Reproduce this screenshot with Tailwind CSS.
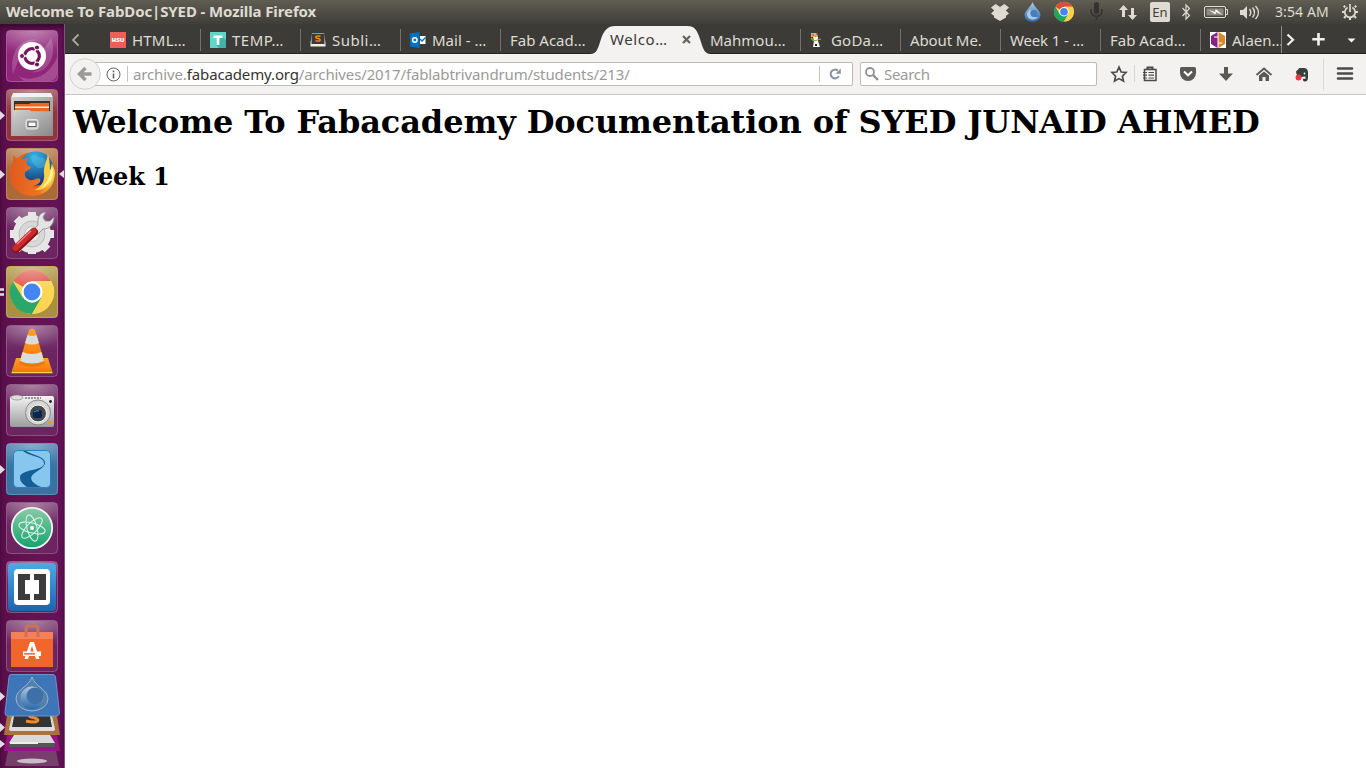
<!DOCTYPE html>
<html lang="en">
<head>
<meta charset="utf-8">
<title>Welcome To FabDoc|SYED</title>
<script src="https://cdn.jsdelivr.net/npm/@tailwindcss/browser@4"></script>
</head>
<body class="w-[1366px] h-[768px] overflow-hidden bg-white font-['Noto_Sans',sans-serif] flex flex-col">
<svg class="absolute w-0 h-0" aria-hidden="true">
  <defs>
    <linearGradient id="gloss" x1="0" y1="0" x2="0" y2="1"><stop offset="0" stop-color="#fff" stop-opacity=".2"/><stop offset=".5" stop-color="#fff" stop-opacity=".05"/><stop offset="1" stop-color="#fff" stop-opacity=".05"/></linearGradient>
    <radialGradient id="shine" cx=".5" cy="0" r=".75"><stop offset="0" stop-color="#fff" stop-opacity=".32"/><stop offset="1" stop-color="#fff" stop-opacity="0"/></radialGradient>
    <linearGradient id="silver" x1="0" y1="0" x2="0" y2="1"><stop offset="0" stop-color="#f4f4f4"/><stop offset="1" stop-color="#9c9c9c"/></linearGradient>
    <linearGradient id="metal" x1="0" y1="0" x2="1" y2="1"><stop offset="0" stop-color="#d0d0d0"/><stop offset="1" stop-color="#8a8a8a"/></linearGradient>
    <linearGradient id="fox" x1="0" y1="0" x2="1" y2="0"><stop offset="0" stop-color="#df5a1e"/><stop offset=".65" stop-color="#ee7424"/><stop offset="1" stop-color="#fbc43c"/></linearGradient>
    <radialGradient id="globe" cx=".45" cy=".15" r=".8"><stop offset="0" stop-color="#35b6e8"/><stop offset="1" stop-color="#123b7c"/></radialGradient>
    <linearGradient id="orange" x1="0" y1="0" x2="0" y2="1"><stop offset="0" stop-color="#ffa02c"/><stop offset="1" stop-color="#f07400"/></linearGradient>
    <linearGradient id="atom" x1="0" y1="0" x2="0" y2="1"><stop offset="0" stop-color="#8bcba6"/><stop offset="1" stop-color="#12a36c"/></linearGradient>
    <linearGradient id="brk" x1="0" y1="0" x2="0" y2="1"><stop offset="0" stop-color="#4fa9e6"/><stop offset="1" stop-color="#1b64b0"/></linearGradient>
    <linearGradient id="drop" x1="0" y1="0" x2="0" y2="1"><stop offset="0" stop-color="#a9c9e6"/><stop offset="1" stop-color="#2d68a8"/></linearGradient>
    <g id="chrome">
      <circle r="22" fill="#f9cf45"/>
      <path d="M0 0 L-19 -11 A22 22 0 0 1 19 -11 L0 -11Z" fill="#dd4b3e"/>
      <path d="M-19.2 -11 A22 22 0 0 0 0 22 L9.5 5.5 L0 9 L-9.5 5.5Z" fill="#1ea362"/>
      <path d="M0 -11 L19.2 -11 A22 22 0 0 1 0 22 L9.5 5.5Z" fill="#fdd24a"/>
      <circle r="10.4" fill="#fff"/><circle r="8.4" fill="#4285f4"/>
    </g>
    <g id="frame"><rect x="6.5" y=".5" width="51" height="51" rx="4" fill="url(#gloss)" stroke="#fff" stroke-opacity=".22"/><rect x="7" y="1" width="50" height="30" rx="4" fill="url(#shine)"/></g>
    <path id="run" d="M0 22v9l5-4.500z" fill="#e3dbe3"/>
  </defs>
</svg>

<header class="h-6 shrink-0 flex items-center bg-linear-to-b from-[#605d52] to-[#3f3e39] text-[#dfdbd2]">
  <h1 class="pl-[6px] pb-[2px] w-[984px] text-[15px] font-bold tracking-[-0.11px] leading-[22px] whitespace-nowrap">Welcome To FabDoc|SYED - Mozilla Firefox</h1>
  <svg class="w-[160px] h-6 shrink-0" viewBox="984 0 160 24">
    <path d="M995.700 4 1000 7 1004.300 4 1009 7.500 1005.800 10.500 1009 13.500 1006 15.800V17.500L1000 21 994 17.500V15.800L991 13.500 994.200 10.500 991 7.500Z" fill="#dfdbd2"/>
    <path d="M1032.500 2C1034 7 1040.500 10.500 1040.500 15A8 7 0 0 1 1024.500 15C1024.500 10.500 1031 7 1032.500 2Z" fill="url(#drop)"/><path d="M1031 9C1029 14 1032 18 1038 17C1035 21.500 1027 20 1027 14.500C1027 12 1029 10 1031 9Z" fill="#c9dff2" opacity=".75"/><circle cx="1034" cy="13.500" r="3.500" fill="#477fb8"/>
    <use href="#chrome" transform="translate(1064 11.700) scale(.45)"/>
    <rect x="1094" y="2" width="5" height="12" rx="2.500" fill="#34332f"/><path d="M1091 9v2a5 5 0 0 0 11 0V9M1096.500 16v4" fill="none" stroke="#34332f" stroke-width="1.500"/>
    <path d="M1123.500 5 1119 10h3v7h3v-7h3zM1132.500 20 1137 15h-3V8h-3v7h-3z" fill="#dfdbd2"/>
  </svg>
  <div class="ml-[6px] w-5 h-5 shrink-0 rounded-[2px] bg-[#dfdbd2] text-[#3f3e39] text-[13px] leading-[20px] text-center">En</div>
  <svg class="w-[100px] h-6 shrink-0" viewBox="1170 0 100 24" fill="none" stroke="#dfdbd2">
    <path d="M1182.500 8 1189.500 15.500 1186 19V5L1189.500 8.500 1182.500 16" stroke-width="1.200"/>
    <rect x="1204.500" y="6.500" width="21" height="11" rx="1.500"/><path d="M1226 9.500h1.500v5h-1.500"/><rect x="1206.500" y="8.500" width="17" height="7" fill="#8d8a81" stroke="none"/><path d="M1209 10 1215.500 14.500 1216 12 1222.500 15 1215.800 9 1215 12Z" fill="#fffdf4" stroke="none"/>
    <path d="M1240 10h3l4-4v13l-4-4h-3z" fill="#dfdbd2" stroke="none"/><path d="M1249.500 9q2.500 3.500 0 7M1252.500 7.500q4 5 0 10M1255.500 6q6 6.500 0 13" stroke-width="1.400"/>
  </svg>
  <span class="ml-[5px] pb-px w-[56px] text-[14px] tracking-[0.1px] leading-[22px] whitespace-nowrap">3:54 AM</span>
  <svg class="ml-[10px] w-[18px] h-[18px] shrink-0" viewBox="-9 -9 18 18" fill="none" stroke="#dfdbd2"><path d="M-2.400 -4.500A5.200 5.200 0 1 0 2.400 -4.500M0 -8V0" stroke-width="1.700"/><path d="M-4.800-4.800-6.200-6.200M4.800-4.800 6.200-6.200M-5.500 0H-8M5.500 0H8M-4.300 4.300-6 6M4.300 4.300 6 6M0 6V8" stroke-width="2.200"/></svg>
</header>

<div class="flex grow min-h-0">
  <nav class="w-[65px] shrink-0 bg-linear-to-r from-[#5a0e4c] via-[#65134f] to-[#64115a] border-r border-[#86507d] shadow-[inset_0_4px_4px_#3b0b31] pt-[6px] flex flex-col gap-[7px]">
    <svg class="w-16 h-[52px] shrink-0" viewBox="0 0 64 52"><rect x="6" width="52" height="52" rx="4" fill="#8a1a72"/><path d="M13 44C8 18 26 3 45 12C34 7 22 14 20 26ZM51 8C58 28 46 45 30 42C43 42 48 30 43 20ZM18 46C32 53 50 46 57 27V44Q56 51 50 51H24Z" fill="#fff" opacity=".18"/><use href="#frame"/><circle cx="32" cy="26" r="14" fill="#fff"/><circle cx="32" cy="26" r="7.300" fill="none" stroke="#76145c" stroke-width="3.300"/><path d="M32 26 20 26M32 26 38 36.500M32 26 38 15.500" stroke="#fff" stroke-width="1.500"/><circle cx="32" cy="26" r="5.500" fill="#fff"/><g fill="#76145c" stroke="#fff"><circle cx="22" cy="26" r="2.500"/><circle cx="37" cy="17.500" r="2.500"/><circle cx="37" cy="34.500" r="2.500"/></g></svg>
    <svg class="w-16 h-[52px] shrink-0" viewBox="0 0 64 52"><use href="#run"/><rect x="6" width="52" height="52" rx="4" fill="#8b2a36"/><use href="#frame"/><path d="M13 4h38l2 5H11Z" fill="#f2f2f2"/><path d="M11 8h42v39H11Z" fill="url(#metal)"/><path d="M14 12h36v10H14Z" fill="#3a302c"/><path d="M15 15h14l2-1h18v8H15Z" fill="#e86a20"/><path d="M15 17.500h34v1.500H15Z" fill="#ffe9d0"/><path d="M13 21h17l1 2h20v24H13Z" fill="url(#metal)"/><rect x="26" y="30.500" width="12" height="9.500" rx="2" fill="#c8c8c8" stroke="#e6e6e6"/><rect x="28" y="33" width="8" height="4.500" fill="#fff" stroke="#555"/></svg>
    <svg class="w-16 h-[52px] shrink-0" viewBox="0 0 64 52"><use href="#run"/><path d="M64 22v8l-5-4z" fill="#e3dbe3"/><rect x="6" width="52" height="52" rx="4" fill="#a8622e"/><use href="#frame"/><circle cx="32" cy="26.500" r="22" fill="#e4621f"/><circle cx="36" cy="20.500" r="17" fill="url(#globe)"/><path d="M31 8C36 5 38 11 43 9C49 15 44 22 38 20C34 17 31 14 31 8Z" fill="#61c3e8" opacity=".35"/><path d="M13 7C16 10 18 11 20 12C22 11 25 11 28 10C26 13 26 14 27 17L31 19C31 21 28 22 25 24C24 28 27 33 33 32C36 31 38 29 40 31C42 35 34 39 30 38C37 43 47 38 50 31C52 25 52 22 51 15C56 24 56 35 48 42C39 50 24 49 15 40C8 32 8 22 13 14Z" fill="url(#fox)"/><path d="M48 6C47 13 43 18 44 26C45 32 42 38 35 42C45 43 54 35 55 26C55 22 54 20 52 16C52 20 51 21 50 22C50 15 49 10 48 6Z" fill="#f9cf45"/><path d="M51 18C51 27 47 35 41 40C49 37 54 30 53 22Z" fill="#fdf09a"/></svg>
    <svg class="w-16 h-[52px] shrink-0" viewBox="0 0 64 52"><rect x="6" width="52" height="52" rx="4" fill="#641a58"/><use href="#frame"/><g transform="translate(32 27)"><circle r="15" fill="none" stroke="#e6e6e6" stroke-width="8"/><g stroke="#e6e6e6" stroke-width="8"><path d="M0-22V-17M0 17V20M-22 0H-17M17 0H22M-15.500-15.500-12-12M12 12 15.500 15.500M-15.500 15.500-12 12"/></g><circle r="13" fill="#d8d8d8" stroke="#bbb"/><circle r="7.500" fill="#ebebeb" stroke="#c4c4c4"/></g><path d="M33 23 38 18C37 10 40 5 46 5L43 10 45 14 50 14 54 10C54 17 50 22 43 22L37 28Z" fill="#e4e4e4" stroke="#858585" stroke-width=".8"/><path d="M16 42 34 25" stroke="#8f1014" stroke-width="8" stroke-linecap="round"/><path d="M15.500 41 33.500 24" stroke="#ca2a2e" stroke-width="6" stroke-linecap="round"/><path d="M17 37 31 24" stroke="#f08080" stroke-width="1.300"/></svg>
    <svg class="w-16 h-[52px] shrink-0" viewBox="0 0 64 52"><path d="M0 23.500h4M0 28.500h4" stroke="#e3dbe3" stroke-width="2.500"/><rect x="6" width="52" height="52" rx="4" fill="#a58a35"/><use href="#chrome" x="32" y="26"/><use href="#frame"/><circle cx="32" cy="26" r="10.400" fill="#fff"/><circle cx="32" cy="26" r="8.400" fill="#4285f4"/></svg>
    <svg class="w-16 h-[52px] shrink-0" viewBox="0 0 64 52"><rect x="6" width="52" height="52" rx="4" fill="#641a58"/><use href="#frame"/><path d="M16 33H48L53 48.500H11Z" fill="url(#orange)"/><path d="M29 5Q32 2 35 5L45 39Q32 45 19 39Z" fill="url(#orange)"/><path d="M27.500 10Q32 12 36.500 10L39 18Q32 21 25 18ZM22.500 27Q32 31 41.500 27L44 36Q32 41 20 36Z" fill="#dcdcdc"/><path d="M12 47.500H52" stroke="#ffd060"/></svg>
    <svg class="w-16 h-[52px] shrink-0" viewBox="0 0 64 52"><rect x="6" width="52" height="52" rx="4" fill="#641a58"/><use href="#frame"/><rect x="10" y="12" width="44" height="31" rx="2" fill="url(#silver)"/><ellipse cx="17" cy="13.500" rx="6" ry="2.500" fill="#ddd" stroke="#777" stroke-width=".6"/><path d="M25 14h16" stroke="#777" stroke-width="1.500" stroke-dasharray="2 1"/><circle cx="38" cy="28.500" r="12.500" fill="#d7d7d7" stroke="#888"/><circle cx="38" cy="29.500" r="8.500" fill="#494949" stroke="#fff"/><rect x="33" y="26" width="9" height="8" rx="2" fill="#0b2456"/><path d="M34 28q3-2 5-1" stroke="#4aa1d8" fill="none"/><circle cx="50.500" cy="17.500" r="1.400" fill="#222"/><rect x="48" y="37" width="3" height="3" fill="#f29a1f"/></svg>
    <svg class="w-16 h-[52px] shrink-0" viewBox="0 0 64 52"><use href="#run"/><rect x="6" width="52" height="52" rx="4" fill="#2f6a9c"/><use href="#frame"/><rect x="13.500" y="7.500" width="37" height="37" rx="4" fill="#86c6ef" stroke="#2882bd"/><path d="M23 8C30 14 45 13 44 21C43 28 19 26 20 35C20 39 24 42 27 44H41C30 39 28 34 36 29C45 24 50 18 38 13C33 11 29 10 26 8Z" fill="#155f96"/></svg>
    <svg class="w-16 h-[52px] shrink-0" viewBox="0 0 64 52"><rect x="6" width="52" height="52" rx="4" fill="#641a58"/><use href="#frame"/><circle cx="32" cy="26" r="20.200" fill="url(#atom)" stroke="#f2f2f2" stroke-width="1.800"/><g transform="translate(32 26) rotate(15)" fill="none" stroke="#d9f3e5" stroke-width="1.100"><ellipse rx="13.500" ry="5"/><ellipse rx="13.500" ry="5" transform="rotate(60)"/><ellipse rx="13.500" ry="5" transform="rotate(120)"/></g><circle cx="32" cy="26" r="2" fill="#fff"/></svg>
    <svg class="w-16 h-[52px] shrink-0" viewBox="0 0 64 52"><rect x="6" width="52" height="52" rx="4" fill="#641a58"/><use href="#frame"/><rect x="8" y="2" width="48" height="48" rx="4" fill="url(#brk)"/><rect x="14" y="8" width="36" height="36" rx="4" fill="#fff"/><path d="M18 13H30V19H25V33H30V39H18ZM34 13H46V39H34V33H39V19H34Z" fill="#3c3c3c"/></svg>
    <svg class="w-16 h-[52px] shrink-0" viewBox="0 0 64 52"><rect x="6" width="52" height="52" rx="4" fill="#641a58"/><use href="#frame"/><path d="M11 12H53V47H11Z" fill="#f0662c"/><path d="M11 12H53V19H11Z" fill="#f58058"/><path d="M26 17V8Q26 6 29 6H35Q38 6 38 8V17" fill="none" stroke="#cf7059" stroke-width="3"/><path d="M24.500 39 30 22H34L39.500 39H36L32 26 28 39ZM23 31.500H41V36H23Z" fill="#fff"/><path d="M24 33.800H35" stroke="#ef7440" stroke-width="1.800"/></svg>
    <svg class="w-16 h-[96px] shrink-0 -mt-[7px]" viewBox="0 672 64 96">
      <path d="M9 745H55L59 766H5Z" fill="#75406a"/><path d="M17 752H47V761Q32 766 17 761Z" fill="#7a3b6e"/><ellipse cx="32" cy="761" rx="15" ry="2.500" fill="#c9bbc6"/>
      <path d="M8 730H56L60 751H4Z" fill="#9a1380"/><path d="M14 735H50L55 743V747H9V743Z" fill="#d9d9d9"/><path d="M9 743H55V747H9Z" fill="#555"/><path d="M10 743H38" stroke="#eee" stroke-width="2"/>
      <path d="M8 709H56L60 735H4Z" fill="#a9713b"/><path d="M13 712H51L55 729Q55 731 53 731H11Q9 731 9 729Z" fill="#ddd"/><path d="M15 711H49L52 727H12Z" fill="#333"/><path d="M39 712C35 710 26 715 31 717C43 719 38 724 26 721" fill="none" stroke="#f08b25" stroke-width="3"/>
      <path d="M11 674.500H53Q55 674.500 55.500 677L59.500 713Q59 716 56 716H8Q5 716 5 713L9 677Q9 674.500 11 674.500Z" fill="#3e74b8" stroke="#6b95ca"/>
      <path d="M32 677C35 687 48 689 48 699A16 12 0 0 1 16 699C16 689 29 687 32 677Z" fill="#5580ac" stroke="#98b6d2"/><circle cx="32" cy="698" r="11.500" fill="url(#drop)"/><circle cx="35" cy="696" r="8.500" fill="#3f70a8"/>
      <g fill="#e3dbe3"><path d="M0 692v9l5-4.500zM0 723v9l5-4.500zM0 740v8l5-4z"/></g>
    </svg>
  </nav>

  <div class="grow min-w-0 flex flex-col">
    <div class="h-[30px] shrink-0 flex bg-[#3c3b37] border-b border-[#252421] text-[#dfdbd2] text-[15px] leading-[22px] whitespace-nowrap [&_span]:pt-[2px]">
      <div class="w-[35px] shrink-0 pl-[5px]"><svg class="w-3 h-[30px]" viewBox="0 0 12 30"><path d="M8.500 10.500 3 16 8.500 21.500" fill="none" stroke="#aaa8a1" stroke-width="1.800"/></svg></div>
      <div class="w-[101px] shrink-0 pl-[10px] flex gap-[6px] items-center"><svg class="w-4 h-4 shrink-0 mt-[2px]" viewBox="0 0 16 16"><rect width="16" height="16" fill="#ee5f5b"/><text x="1.500" y="10.200" font-size="5.800" font-weight="900" textLength="13" lengthAdjust="spacingAndGlyphs" fill="#fff">HSU</text></svg><span class="tracking-[0.2px]">HTML…</span></div>
      <div class="w-[100px] shrink-0 pl-[9px] flex gap-[6px] items-center"><i class="w-px h-[22px] bg-[#74736d] -ml-[10px] mr-[3px] mt-[2px]"></i><svg class="w-4 h-4 shrink-0 mt-[2px]" viewBox="0 0 16 16"><rect width="16" height="16" fill="#5fd6c8"/><path d="M12 4 16 8V16H9L6 13Z" fill="#43b3aa"/><path d="M3.500 3.500H12.500V6H9.300V13H6.700V6H3.500Z" fill="#fff"/></svg><span class="tracking-[0.5px]">TEMP…</span></div>
      <div class="w-[100px] shrink-0 pl-[9px] flex gap-[6px] items-center"><i class="w-px h-[22px] bg-[#74736d] -ml-[10px] mr-[3px] mt-[2px]"></i><svg class="w-4 h-4 shrink-0 mt-[2px]" viewBox="0 0 16 16"><path d="M2 1H14L15.500 11V14.500H.500V11Z" fill="#eee"/><path d="M1.500 1.500H14.500V12H1.500Z" fill="#3b3b3b"/><path d="M10.500 4.200C4 3 5 6.500 8 6.500C11.500 7 11 10 5.500 8.800" fill="none" stroke="#f0891f" stroke-width="1.500"/></svg><span class="tracking-[0.5px]">Subli…</span></div>
      <div class="w-[100px] shrink-0 pl-[9px] flex gap-[6px] items-center"><i class="w-px h-[22px] bg-[#74736d] -ml-[10px] mr-[3px] mt-[2px]"></i><svg class="w-4 h-4 shrink-0 mt-[2px]" viewBox="0 0 16 16"><path d="M0 1.500 9.500 0V16L0 14.500Z" fill="#0072c6"/><circle cx="4.800" cy="8" r="2.200" fill="none" stroke="#fff" stroke-width="1.500"/><path d="M10 4H15.500V12H10Z" fill="#fff"/><path d="M10 7 12 9 15.500 5.500" fill="none" stroke="#0072c6" stroke-width="1.300"/></svg><span>Mail - …</span></div>
      <div class="w-[89px] shrink-0 pl-[9px] flex gap-[6px] items-center"><i class="w-px h-[22px] bg-[#74736d] -ml-[10px] mr-[3px] mt-[2px]"></i><span>Fab Acad…</span></div>
      <div class="relative w-[121px] shrink-0 mt-[2px] h-7 text-[#3c3b37] leading-[23px] flex">
        <svg class="absolute inset-0 w-[121px] h-[28px]" viewBox="0 0 121 28"><path d="M0 28C7 28 8 22 11 13C14 4 18 0 25 0H97C105 0 107 4 110 13C113 22 114 28 121 28Z" fill="#f3f2f1"/></svg>
        <span class="relative pl-[20px] w-[92px] tracking-[0.6px]">Welco…</span>
        <svg class="relative w-[9px] h-[9px] shrink-0 mt-[9px]" viewBox="0 0 9 9"><path d="M1 1 8 8M8 1 1 8" stroke="#65645f" stroke-width="2.300"/></svg>
      </div>
      <div class="w-[90px] shrink-0 -ml-[1px] flex items-center"><span>Mahmou…</span></div>
      <div class="w-[100px] shrink-0 pl-[9px] flex gap-[6px] items-center"><i class="w-px h-[22px] bg-[#74736d] -ml-[9px] mr-[2px] mt-[2px]"></i><svg class="w-4 h-4 shrink-0 mt-[2px]" viewBox="0 0 16 16"><path d="M2 1H8L9 5H2Z" fill="#e8ad70"/><path d="M3 3H5M7 2H8M6 5H7" stroke="#8f4a1c"/><path d="M4 5H9V9L11 15H4L5 9Z" fill="#f4f4ee"/><path d="M5 9 12 7M2 6 5 9" stroke="#86b52b" stroke-width="1.300"/><path d="M6 12h2v2H6z" fill="#222"/></svg><span class="tracking-[0.2px]">GoDa…</span></div>
      <div class="w-[100px] shrink-0 pl-[10px] flex gap-[6px] items-center"><i class="w-px h-[22px] bg-[#74736d] -ml-[10px] mr-[3px] mt-[2px]"></i><span class="tracking-[-0.1px]">About Me.</span></div>
      <div class="w-[100px] shrink-0 pl-[10px] flex gap-[6px] items-center"><i class="w-px h-[22px] bg-[#74736d] -ml-[10px] mr-[3px] mt-[2px]"></i><span class="tracking-[-0.15px]">Week 1 - …</span></div>
      <div class="w-[100px] shrink-0 pl-[10px] flex gap-[6px] items-center"><i class="w-px h-[22px] bg-[#74736d] -ml-[10px] mr-[3px] mt-[2px]"></i><span>Fab Acad…</span></div>
      <div class="w-[81px] shrink-0 pl-[10px] flex gap-[6px] items-center overflow-hidden"><i class="w-px h-[22px] bg-[#74736d] -ml-[10px] mr-[3px] mt-[2px] shrink-0"></i><svg class="w-4 h-4 shrink-0 mt-[2px]" viewBox="0 0 16 16"><rect width="16" height="16" fill="#fff"/><path d="M7.500 0V16L1 12V4Z" fill="#84218b"/><path d="M8.500 0V16L15 12V4Z" fill="#d88a2b"/><path d="M4 5H8M8 11H12" stroke="#fff" stroke-width="1.200"/></svg><span>Alaen…</span></div>
      <svg class="w-[85px] h-[30px] shrink-0" viewBox="1281 24 85 30"><path d="M1281.500 26V53" stroke="#8a8983"/><path d="M1287.500 34.500 1293 39.800 1287.500 45" fill="none" stroke="#f4f2ee" stroke-width="2.200"/><path d="M1318.500 33V45.500M1312.300 39.200H1324.700" stroke="#f4f2ee" stroke-width="2.600"/><path d="M1347.500 38.500H1355.500L1351.500 42.500Z" fill="#f4f2ee"/></svg>
    </div>

    <div class="h-[41px] shrink-0 flex items-center bg-[#f3f2f1] border-b border-[#c8c6c4] text-[15px] whitespace-nowrap">
      <svg class="relative z-10 ml-1 w-8 h-8 shrink-0" viewBox="0 0 32 32"><circle cx="16" cy="16" r="15.300" fill="#f3f2f1" stroke="#d3d1cf"/><path d="M10.500 16H22.500M16.500 10 10.500 16 16.500 22" fill="none" stroke="#9b9a98" stroke-width="3.400"/></svg>
      <div class="-ml-[8px] w-[760px] h-6 shrink-0 flex items-center bg-white border border-[#bebcba] rounded-r-[2px]">
        <svg class="ml-[12px] w-[15px] h-[15px] shrink-0" viewBox="0 0 15 15"><circle cx="7.500" cy="7.500" r="6.500" fill="none" stroke="#62615f"/><path d="M7.500 6.500V11.500M7.500 3.500V5.200" stroke="#62615f" stroke-width="1.600"/></svg>
        <i class="ml-[6px] w-px h-4 bg-[#c4c3c1]"></i>
        <span class="ml-[5px] w-[686px] text-[#9b9a98] leading-[22px] tracking-[-0.13px]">archive.<b class="font-normal text-[#363532]">fabacademy.org</b>/archives/2017/fablabtrivandrum/students/213/</span>
        <i class="w-px h-4 bg-[#c4c3c1]"></i>
        <svg class="ml-[9px] w-3 h-3 shrink-0" viewBox="0 0 12 12"><path d="M9.800 8.300A4.400 4.400 0 1 1 8.800 2.600" fill="none" stroke="#8593a3" stroke-width="2"/><path d="M11.800 .500V5.800H6.500Z" fill="#8593a3"/></svg>
      </div>
      <div class="ml-[7px] w-[237px] h-6 shrink-0 flex items-center bg-white border border-[#bebcba] rounded-[2px]">
        <svg class="ml-1 w-[14px] h-[14px]" viewBox="0 0 14 14"><circle cx="5" cy="5" r="4" fill="none" stroke="#92918f" stroke-width="1.800"/><path d="M8 8 13 13" stroke="#92918f" stroke-width="2.400"/></svg>
        <span class="ml-[5px] text-[#9b9a98] leading-[22px] tracking-[-0.3px]">Search</span>
      </div>
      <svg class="w-[269px] h-10 shrink-0" viewBox="1097 54 269 40" fill="none" stroke="#4c4b48">
        <path d="M1119 67 1121.200 72 1126 72.500 1122.400 76.200 1123.500 81 1119 78.600 1114.500 81 1115.600 76.200 1112 72.500 1116.800 72Z" stroke-width="1.700"/>
        <path d="M1134.500 65V82" stroke="#d5d4d2"/>
        <path d="M1144.500 69.500H1156V80.500H1144.500Z" stroke-width="1.500"/><path d="M1148.500 72.500H1154M1148.500 75.200H1154M1148.500 78H1154" stroke-width="1.200"/><path d="M1147.500 69V67.500H1152.500V69" stroke-width="2"/><path d="M1143 72.500h4M1143 75.200h4M1143 78h4" stroke-width="1.200"/>
        <path d="M1181.500 67H1194.500Q1196 67 1196 68.500V73A8 8 0 0 1 1180 73V68.500Q1180 67 1181.500 67Z" fill="#5a5956" stroke="none"/><path d="M1184 71.500 1188 75.300 1192 71.500" stroke="#fff" stroke-width="2"/>
        <path d="M1224 67H1228V73.500H1233L1226 81 1219 73.500H1224Z" fill="#5a5956" stroke="none"/>
        <path d="M1256.500 75 1264 68.500 1271.500 75" stroke="#5a5956" stroke-width="1.900"/><path d="M1259 75.500 1264 71.500 1269 75.500V81H1265.500V77H1262.500V81H1259Z" fill="#5a5956" stroke="none"/>
        <path d="M1296 71.500 1299.500 68H1303Q1307.500 67.500 1308 72V78Q1307.500 82 1304.500 81.500Q1302 80.500 1303.500 78.500L1305.500 79V76.500Q1302 76.500 1301 77.500Q1296.500 77 1296 71.500Z" fill="#34403c" stroke="none"/><circle cx="1304.500" cy="73.500" r=".9" fill="#eee" stroke="none"/><circle cx="1298.500" cy="77.500" r="2.900" fill="#fb3442" stroke="none"/>
        <path d="M1323.500 58V90" stroke="#dad9d7"/>
        <path d="M1338 68.500H1352M1338 73.500H1352M1338 78.500H1352" stroke-width="2.600" stroke-linecap="round"/>
      </svg>
    </div>

    <main class="grow bg-white px-2 text-black font-['DejaVu_Serif',serif] font-bold whitespace-nowrap">
      <h1 class="mt-[9px] text-[32px] leading-[37px] tracking-[-0.107px]">Welcome To Fabacademy Documentation of SYED JUNAID AHMED</h1>
      <h2 class="mt-[22px] text-[24px] leading-[28px] tracking-[-0.1px]">Week 1</h2>
    </main>
  </div>
</div>
</body>
</html>
